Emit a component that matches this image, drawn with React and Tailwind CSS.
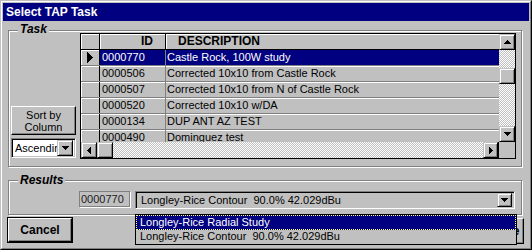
import React from 'react';

const raised = "border border-t-white border-l-white border-r-black border-b-black shadow-[inset_-1px_-1px_0_#808080]";
const sbBtn = "bg-[#c0c0c0] border border-t-[#c0c0c0] border-l-[#c0c0c0] border-r-black border-b-black shadow-[inset_1px_1px_0_#fff,inset_-1px_-1px_0_#808080] flex items-center justify-center";
const sunken = "border border-t-[#808080] border-l-[#808080] border-r-white border-b-white shadow-[inset_1px_1px_0_#000,inset_-1px_-1px_0_#c0c0c0]";
const dither = "bg-[image:repeating-conic-gradient(#fff_0_25%,#c0c0c0_0_50%)] bg-[length:2px_2px]";
const etched = "border border-[#808080] shadow-[inset_1px_1px_0_#fff,1px_1px_0_#fff]";

const arrows = {
  up: { w: 7, h: 4, d: "M3 0h1v1H3z M2 1h3v1H2z M1 2h5v1H1z M0 3h7v1H0z" },
  down: { w: 7, h: 4, d: "M0 0h7v1H0z M1 1h5v1H1z M2 2h3v1H2z M3 3h1v1H3z" },
  left: { w: 4, h: 7, d: "M3 0h1v7H3z M2 1h1v5H2z M1 2h1v3H1z M0 3h1v1H0z" },
  right: { w: 4, h: 7, d: "M0 0h1v7H0z M1 1h1v5H1z M2 2h1v3H2z M3 3h1v1H3z" },
};

const Arrow = ({ dir }) => {
  const a = arrows[dir];
  return (
    <svg width={a.w} height={a.h} viewBox={`0 0 ${a.w} ${a.h}`} shapeRendering="crispEdges">
      <path d={a.d} fill="#000" />
    </svg>
  );
};

const rows = [
  ['0000770', 'Castle Rock, 100W study'],
  ['0000506', 'Corrected 10x10 from Castle Rock'],
  ['0000507', 'Corrected 10x10 from N of Castle Rock'],
  ['0000520', 'Corrected 10x10 w/DA'],
  ['0000134', 'DUP ANT AZ TEST'],
  ['0000490', 'Dominguez test'],
];

const App = () => {
  return (
    <div className="w-[532px] h-[250px] bg-[#c0c0c0] overflow-hidden font-['Liberation_Sans',Arial,sans-serif] text-[11px] text-black">
      <div className="h-full border border-t-[#c0c0c0] border-l-[#c0c0c0] border-r-black border-b-black">
        <div className="h-full border border-t-white border-l-white border-r-[#808080] border-b-[#808080] p-px flex flex-col">
          {/* title bar */}
          <div className="h-[18px] shrink-0 bg-[#000080] text-white font-bold text-[12px] leading-[18px] pl-[3px]">
            Select TAP Task
          </div>

          {/* Task group */}
          <div className={`relative mt-[9px] ml-[5px] w-[514px] h-[137px] shrink-0 ${etched} pt-[2px] pl-[2px] flex`}>
            <span className="absolute left-[9px] top-[-9px] px-[2px] bg-[#c0c0c0] font-bold italic text-[12px] leading-[14px]">Task</span>

            <div className="w-[65px] h-[126px] flex flex-col justify-end gap-[3px] pb-px">
              <div className={`h-[29px] ${raised} flex flex-col items-center justify-center leading-[12px]`}>
                <span>Sort by</span>
                <span>Column</span>
              </div>
              <div className={`h-[20px] ${sunken} bg-white flex items-center p-[2px]`}>
                <span className="flex-1 overflow-hidden whitespace-nowrap pl-px">Ascending</span>
                <div className={`w-[16px] h-[16px] shrink-0 ${sbBtn}`}><Arrow dir="down" /></div>
              </div>
            </div>

            {/* grid */}
            <div className="ml-[4px] w-[436px] h-[126px] border border-black flex flex-col bg-[#c0c0c0]">
              <div className="flex h-[108px]">
                <div className="w-[418px] overflow-hidden">
                  <div className="flex h-[16px] border-b border-black font-bold text-[12px]">
                    <div className="w-[19px] border-r border-black shadow-[inset_1px_1px_0_#fff]" />
                    <div className="w-[66px] border-r border-black shadow-[inset_1px_1px_0_#fff] text-right pr-[12px] leading-[15px]">ID</div>
                    <div className="flex-1 shadow-[inset_1px_1px_0_#fff] pl-[12px] leading-[15px]">DESCRIPTION</div>
                  </div>
                  {rows.map(([id, desc], i) => (
                    <div key={id} className="flex h-[16px] border-b border-[#808080]">
                      <div className="w-[19px] border-r border-black shadow-[inset_1px_1px_0_#fff] flex items-center justify-center">
                        {i === 0 && (
                          <svg width="6" height="11" viewBox="0 0 6 11" shapeRendering="crispEdges">
                            <path d="M0 0h1v11H0z M1 1h1v9H1z M2 2h1v7H2z M3 3h1v5H3z M4 4h1v3H4z M5 5h1v1H5z" fill="#000" />
                          </svg>
                        )}
                      </div>
                      <div className={`w-[66px] border-r border-[#808080] pl-[2px] leading-[15px] ${i === 0 ? 'bg-[#000080] text-white' : 'shadow-[inset_0_1px_0_#fff]'}`}>{id}</div>
                      <div className={`flex-1 pl-[1px] leading-[15px] whitespace-nowrap ${i === 0 ? 'bg-[#000080] text-white' : 'shadow-[inset_0_1px_0_#fff]'}`}>{desc}</div>
                    </div>
                  ))}
                </div>
                {/* vertical scrollbar */}
                <div className={`w-[16px] flex flex-col ${dither}`}>
                  <div className={`h-[16px] ${sbBtn}`}><Arrow dir="up" /></div>
                  <div className="h-[18px]" />
                  <div className={`h-[16px] ${sbBtn}`} />
                  <div className="flex-1" />
                  <div className={`h-[16px] ${sbBtn}`}><Arrow dir="down" /></div>
                </div>
              </div>
              {/* horizontal scrollbar */}
              <div className="flex h-[16px]">
                <div className={`w-[417px] flex ${dither}`}>
                  <div className={`w-[16px] ${sbBtn}`}><Arrow dir="left" /></div>
                  <div className={`w-[16px] ${sbBtn}`} />
                  <div className="flex-1" />
                  <div className={`w-[15px] ${sbBtn}`}><Arrow dir="right" /></div>
                </div>
                <div className="flex-1 border-l border-black bg-[#c0c0c0]" />
              </div>
            </div>
          </div>

          {/* Results group */}
          <div className={`relative mt-[13px] ml-[5px] w-[514px] h-[35px] shrink-0 ${etched} pt-[10px] pl-[70px] flex gap-[4px]`}>
            <span className="absolute left-[9px] top-[-8px] px-[2px] bg-[#c0c0c0] font-bold italic text-[12px] leading-[14px]">Results</span>
            <div className="w-[52px] h-[17px] border border-t-[#808080] border-l-[#808080] border-r-white border-b-white shadow-[inset_-1px_-1px_0_#808080] pl-px leading-[15px] text-[#202020]">0000770</div>
            <div className="relative">
              <div className={`w-[380px] h-[18px] ${sunken} flex items-center p-[2px]`}>
                <span className="flex-1 pl-[3px] whitespace-pre">Longley-Rice Contour  90.0% 42.029dBu</span>
                <div className={`w-[15px] h-[14px] ${sbBtn}`}><Arrow dir="down" /></div>
              </div>
              <div className="absolute left-0 top-full w-[382px] h-[31px] border border-black bg-[#c0c0c0] z-10">
                <div className="h-[15px] bg-[#000080] text-white border border-dotted border-[#ffff80] pl-[3px] leading-[13px] whitespace-pre">Longley-Rice Radial Study</div>
                <div className="h-[14px] pl-[4px] leading-[13px] whitespace-pre">Longley-Rice Contour  90.0% 42.029dBu</div>
              </div>
            </div>
          </div>

          {/* buttons */}
          <div className="flex justify-between mt-[2px] pl-[4px] pr-[5px]">
            <div className="w-[66px] h-[26px] border border-black">
              <div className={`h-full ${raised} flex items-center justify-center font-bold text-[12px]`}>Cancel</div>
            </div>
            <div className="w-[61px] h-[26px] mt-px">
              <div className={`h-full ${raised} flex items-center justify-center font-bold text-[12px]`}>Continue</div>
            </div>
          </div>
        </div>
      </div>
    </div>
  );
};

export default App;
